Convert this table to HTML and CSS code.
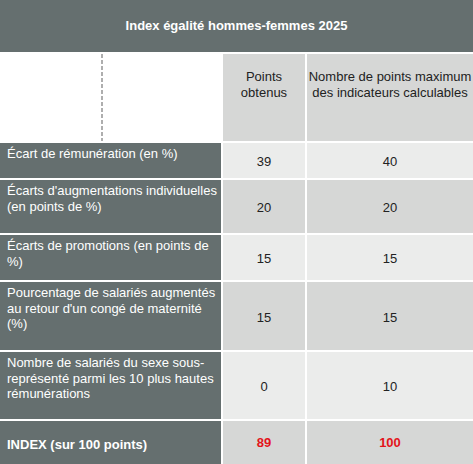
FILE: index.html
```html
<!DOCTYPE html>
<html lang="fr">

<head>
  <meta charset="UTF-8">
  <meta name="viewport" content="width=device-width, initial-scale=1.0">
  <title>Index égalité hommes-femmes 2025</title>
  <link rel="stylesheet" href="styles.css">
</head>

<body>
  <div class="indexTable">
    <div class="title">Index égalité hommes-femmes 2025</div>

    <div class="blank"><span class="dash"></span></div>
    <div class="head dark">Points<br>obtenus</div>
    <div class="head dark">Nombre de points maximum<br>des indicateurs calculables</div>

    <div class="label">Écart de rémunération (en %)</div>
    <div class="num">39</div>
    <div class="num">40</div>

    <div class="label">Écarts d'augmentations individuelles (en points de %)</div>
    <div class="num dark">20</div>
    <div class="num dark">20</div>

    <div class="label">Écarts de promotions (en points de %)</div>
    <div class="num">15</div>
    <div class="num">15</div>

    <div class="label">Pourcentage de salariés augmentés au retour d'un congé de maternité (%)</div>
    <div class="num dark">15</div>
    <div class="num dark">15</div>

    <div class="label">Nombre de salariés du sexe sous-représenté parmi les 10 plus hautes rémunérations</div>
    <div class="num">0</div>
    <div class="num">10</div>

    <div class="label total">INDEX (sur 100 points)</div>
    <div class="num dark total">89</div>
    <div class="num dark total">100</div>
  </div>
</body>

</html>
```

FILE: styles.css
```css
html,
body {
  margin: 0;
  padding: 0;
  background-color: #fff;
}

.indexTable {
  display: grid;
  width: 473px;
  grid-template-columns: 221px 82px 1fr;
  grid-template-rows: 52px 87px 35px 53px 45px 68px 67px 43px;
  gap: 2px;
  font-family: "Liberation Sans", Arial, sans-serif;
  font-size: 13px;
  line-height: 15.5px;
}

.title {
  grid-column: 1 / 4;
  background-color: #656f6f;
  color: #fff;
  font-weight: bold;
  display: flex;
  align-items: center;
  justify-content: center;
}

.blank {
  position: relative;
  background-color: #fff;
}

.blank .dash {
  position: absolute;
  left: 101px;
  top: 0;
  bottom: 0;
  width: 2px;
  background: repeating-linear-gradient(to bottom, #aeaeae 0 4px, transparent 4px 6px);
}

.head {
  text-align: center;
  color: #222;
  padding-top: 15px;
}

.label {
  background-color: #656f6f;
  color: #fff;
  padding: 3px 2px 0 7px;
}

.num {
  background-color: #ebeceb;
  color: #222;
  display: flex;
  align-items: center;
  justify-content: center;
  padding-top: 3px;
  box-sizing: border-box;
}

.dark {
  background-color: #d6d7d6;
}

.label.total {
  font-weight: bold;
  padding-top: 16px;
}

.num.total {
  color: #e3141b;
  font-weight: bold;
  align-items: flex-start;
  padding-top: 14px;
}
```
